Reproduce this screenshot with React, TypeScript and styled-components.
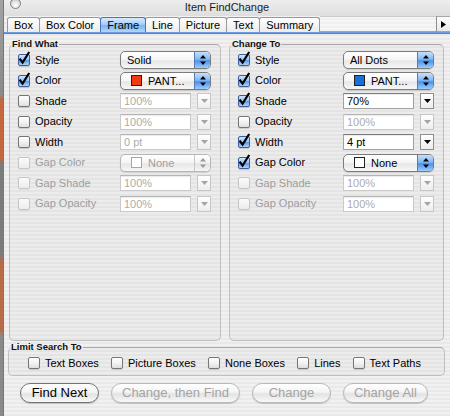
import React from 'react';
import styled, { createGlobalStyle } from 'styled-components';

const GlobalStyle = createGlobalStyle`
  *, *::before, *::after { box-sizing: border-box; }
  html, body { margin: 0; padding: 0; }
  body {
    width: 450px;
    height: 416px;
    overflow: hidden;
    background: #8b8b8b;
    font-family: "Liberation Sans", Arial, sans-serif;
  }
`;

type RowSpec = {
  label: string;
  checked?: boolean;
  disabled?: boolean;
  kind: 'popup' | 'field';
  value: string;
  swatch?: string;
  live?: boolean;
};

const findRows: RowSpec[] = [
  { label: 'Style', checked: true, kind: 'popup', value: 'Solid', live: true },
  { label: 'Color', checked: true, kind: 'popup', value: 'PANT...', swatch: '#f23a10', live: true },
  { label: 'Shade', kind: 'field', value: '100%' },
  { label: 'Opacity', kind: 'field', value: '100%' },
  { label: 'Width', kind: 'field', value: '0 pt' },
  { label: 'Gap Color', disabled: true, kind: 'popup', value: 'None', swatch: '#ffffff' },
  { label: 'Gap Shade', disabled: true, kind: 'field', value: '100%' },
  { label: 'Gap Opacity', disabled: true, kind: 'field', value: '100%' },
];

const changeRows: RowSpec[] = [
  { label: 'Style', checked: true, kind: 'popup', value: 'All Dots', live: true },
  { label: 'Color', checked: true, kind: 'popup', value: 'PANT...', swatch: '#1b6fd8', live: true },
  { label: 'Shade', checked: true, kind: 'field', value: '70%', live: true },
  { label: 'Opacity', kind: 'field', value: '100%' },
  { label: 'Width', checked: true, kind: 'field', value: '4 pt', live: true },
  { label: 'Gap Color', checked: true, kind: 'popup', value: 'None', swatch: '#ffffff', live: true },
  { label: 'Gap Shade', disabled: true, kind: 'field', value: '100%' },
  { label: 'Gap Opacity', disabled: true, kind: 'field', value: '100%' },
];

const tabs = ['Box', 'Box Color', 'Frame', 'Line', 'Picture', 'Text', 'Summary'];
const limits = ['Text Boxes', 'Picture Boxes', 'None Boxes', 'Lines', 'Text Paths'];

export default function App() {
  return (
    <Screen>
      <GlobalStyle />
      <DesktopEdge />
      <Window>
        <TitleBar>
          <CloseDot />
          <Title>Item FindChange</Title>
          <span />
        </TitleBar>
        <TabStrip>
          {tabs.map(t => (
            <Tab key={t} $active={t === 'Frame'}>{t}</Tab>
          ))}
          <TabFiller />
          <ScrollArrow>
            <svg width="5" height="7" viewBox="0 0 5 7">
              <path d="M0 0 L5 3.5 L0 7Z" fill="#000" />
            </svg>
          </ScrollArrow>
        </TabStrip>
        <TabRule />
        <Body>
          <Columns>
            <Panel title="Find What" rows={findRows} />
            <Panel title="Change To" rows={changeRows} />
          </Columns>
          <LimitGroup>
            <GroupTitle>Limit Search To</GroupTitle>
            <LimitOptions>
              {limits.map(l => (
                <CheckLabel key={l}>
                  <CheckBox />
                  {l}
                </CheckLabel>
              ))}
            </LimitOptions>
          </LimitGroup>
          <ButtonRow>
            <PushButton>Find Next</PushButton>
            <PushButton $disabled>Change, then Find</PushButton>
            <PushButton $disabled>Change</PushButton>
            <PushButton $disabled>Change All</PushButton>
          </ButtonRow>
        </Body>
      </Window>
    </Screen>
  );
}

function Panel({ title, rows }: { title: string; rows: RowSpec[] }) {
  return (
    <Group>
      <GroupTitle>{title}</GroupTitle>
      <Rows>
        {rows.map(r => (
          <Row key={r.label}>
            <CheckLabel $disabled={r.disabled}>
              <CheckBox checked={r.checked} disabled={r.disabled} />
              {r.label}
            </CheckLabel>
            {r.kind === 'popup' ? (
              <Popup $disabled={!r.live}>
                <PopupText $indent={!!r.swatch}>
                  {r.swatch && <Swatch $color={r.swatch} $disabled={!r.live} />}
                  {r.value}
                </PopupText>
                <PopupArrows $disabled={!r.live}>
                  <svg width="6" height="10" viewBox="0 0 6 10">
                    <path d="M0 3.5 L3 0 L6 3.5Z M0 6.5 L3 10 L6 6.5Z" fill={r.live ? '#000' : '#9a9a9a'} />
                  </svg>
                </PopupArrows>
              </Popup>
            ) : (
              <FieldGroup>
                <Field $disabled={!r.live}>{r.value}</Field>
                <StepButton $disabled={!r.live}>
                  <svg width="7" height="4" viewBox="0 0 7 4">
                    <path d="M0 0 L7 0 L3.5 4Z" fill={r.live ? '#000' : '#a4a4a4'} />
                  </svg>
                </StepButton>
              </FieldGroup>
            )}
          </Row>
        ))}
      </Rows>
    </Group>
  );
}

function CheckBox({ checked, disabled }: { checked?: boolean; disabled?: boolean }) {
  return (
    <Box $checked={checked} $disabled={disabled}>
      {checked && (
        <Tick width="14" height="14" viewBox="0 0 14 14">
          <path d="M1.6 4.6 L4.6 8.6 L11.2 -2" fill="none" stroke="#000" strokeWidth="2.2" />
        </Tick>
      )}
    </Box>
  );
}

const Screen = styled.div`
  display: flex;
  width: 450px;
  height: 416px;
  overflow: hidden;
`;

const DesktopEdge = styled.div`
  flex: none;
  width: 3px;
  background: linear-gradient(
    to bottom,
    #a2a2a2 0,
    #8a8a8a 95px,
    #c4683e 100px,
    #c4683e 158px,
    #7c7c7c 164px,
    #7c7c7c 255px,
    #b96b48 262px,
    #b96b48 330px,
    #8a8a8a 336px
  );
`;

const Window = styled.div`
  flex: 1;
  display: flex;
  flex-direction: column;
  border-left: 1px solid #777;
  background: repeating-linear-gradient(to bottom, #f1f1f1 0 2px, #e9e9e9 2px 4px);
  color: #000;
`;

const TitleBar = styled.div`
  flex: none;
  height: 16px;
  display: grid;
  grid-template-columns: 40px 1fr 40px;
  align-items: start;
  background: linear-gradient(#ededed, #dedede);
`;

const CloseDot = styled.span`
  width: 11px;
  height: 11px;
  margin: -2px 0 0 6px;
  border-radius: 50%;
  border: 1px solid #7f7f7f;
  background: radial-gradient(circle at 50% 70%, #ffffff 0, #e6e6e6 45%, #b6b6b6 100%);
`;

const Title = styled.div`
  text-align: center;
  font-size: 11px;
  line-height: 13px;
  padding-top: 1px;
  color: #1c1c1c;
`;

const TabStrip = styled.div`
  flex: none;
  height: 16px;
  display: flex;
  align-items: flex-end;
  padding-left: 3px;
`;

const Tab = styled.div<{ $active?: boolean }>`
  position: relative;
  z-index: ${p => (p.$active ? 1 : 0)};
  height: 15px;
  margin-right: -1px;
  padding: 0 6px;
  border: 1px solid ${p => (p.$active ? '#4d72b6' : '#989898')};
  border-bottom: none;
  border-radius: 3px 3px 0 0;
  font-size: 11px;
  line-height: 14px;
  white-space: nowrap;
  background: ${p =>
    p.$active
      ? 'linear-gradient(#d8ebff, #a6cef8 45%, #7bb4f1 55%, #b0d7fb)'
      : 'linear-gradient(#ffffff, #ebebeb)'};
`;

const TabFiller = styled.div`
  flex: 1;
  height: 16px;
  margin-left: 1px;
  border-top: 1px solid #cbcbcb;
  border-bottom: 1px solid #a4a4a4;
  background: rgba(255, 255, 255, 0.35);
`;

const ScrollArrow = styled.div`
  flex: none;
  width: 14px;
  height: 16px;
  display: flex;
  align-items: center;
  justify-content: center;
  border-left: 1px solid #8e8e8e;
  border-top: 1px solid #a8a8a8;
  border-bottom: 1px solid #a4a4a4;
  background: linear-gradient(#ffffff, #e8e8e8);
`;

const TabRule = styled.div`
  flex: none;
  height: 2px;
  background: linear-gradient(#7ca9e8, #3f77cc);
`;

const Body = styled.div`
  flex: 1;
  display: flex;
  flex-direction: column;
  padding: 4px 6px 0 5px;
`;

const Columns = styled.div`
  display: grid;
  grid-template-columns: 212px 1fr;
  column-gap: 8px;
  height: 303px;
`;

const Group = styled.fieldset`
  margin: 0;
  padding: 0;
  min-width: 0;
  border: 1px solid #bfbfbf;
  border-top-color: #a8a8a8;
  border-radius: 5px;
  background: rgba(0, 0, 0, 0.02);
`;

const GroupTitle = styled.legend`
  margin-left: 1px;
  padding: 0 1px;
  font-size: 9.5px;
  font-weight: bold;
  line-height: 12px;
  color: #111;
`;

const Rows = styled.div`
  display: flex;
  flex-direction: column;
  gap: 2.5px;
  padding: 1px 9px 0 8px;
`;

const Row = styled.div`
  display: grid;
  grid-template-columns: 1fr 91px;
  align-items: center;
  height: 18px;
`;

const CheckLabel = styled.label<{ $disabled?: boolean }>`
  display: flex;
  align-items: center;
  gap: 5px;
  font-size: 11px;
  line-height: 13px;
  white-space: nowrap;
  color: ${p => (p.$disabled ? '#9e9e9e' : '#000')};
`;

const Box = styled.span<{ $checked?: boolean; $disabled?: boolean }>`
  position: relative;
  flex: none;
  width: 12px;
  height: 12px;
  border-radius: 2px;
  border: 1px solid ${p => (p.$checked ? '#3e5f9a' : p.$disabled ? '#c6c6c6' : '#767676')};
  background: ${p =>
    p.$checked
      ? 'linear-gradient(#d2e6fc, #92c0f4 50%, #5e9de9 55%, #acd4fb)'
      : p.$disabled
      ? 'linear-gradient(#fbfbfb, #ececec)'
      : 'linear-gradient(#ffffff, #f2f2f2 50%, #dedede)'};
  box-shadow: 0 1px 1px rgba(0, 0, 0, ${p => (p.$disabled ? 0.05 : 0.15)});
`;

const Tick = styled.svg`
  position: absolute;
  left: -1px;
  top: -1px;
  overflow: visible;
`;

const Popup = styled.div<{ $disabled?: boolean }>`
  height: 18px;
  display: flex;
  align-items: stretch;
  border: 1px solid ${p => (p.$disabled ? '#b6b6b6' : '#7c7c7c')};
  border-radius: 5px;
  overflow: hidden;
  background: linear-gradient(#ffffff, #f4f4f4 50%, #e6e6e6 55%, #f7f7f7);
  box-shadow: 0 1px 1px rgba(0, 0, 0, 0.12);
  font-size: 11px;
  color: ${p => (p.$disabled ? '#9e9e9e' : '#000')};
`;

const PopupText = styled.span<{ $indent?: boolean }>`
  flex: 1;
  display: flex;
  align-items: center;
  gap: 6px;
  padding-left: ${p => (p.$indent ? 10 : 6)}px;
  white-space: nowrap;
`;

const Swatch = styled.span<{ $color: string; $disabled?: boolean }>`
  width: 11px;
  height: 11px;
  border: 1px solid ${p => (p.$disabled ? '#a6a6a6' : '#222')};
  background: ${p => p.$color};
`;

const PopupArrows = styled.span<{ $disabled?: boolean }>`
  flex: none;
  width: 16px;
  display: flex;
  align-items: center;
  justify-content: center;
  border-left: 1px solid ${p => (p.$disabled ? '#c8c8c8' : '#5878b8')};
  background: ${p =>
    p.$disabled
      ? 'linear-gradient(#ffffff, #f2f2f2 50%, #e4e4e4 55%, #f6f6f6)'
      : 'linear-gradient(#c4e0fc, #84b8f3 45%, #4b92ea 55%, #9ccdfb)'};
`;

const FieldGroup = styled.div`
  display: flex;
  align-items: center;
  gap: 6px;
`;

const Field = styled.div<{ $disabled?: boolean }>`
  width: 71px;
  height: 16px;
  padding: 0 3px;
  border: 1px solid ${p => (p.$disabled ? '#cacaca' : '#a2a2a2')};
  border-top-color: ${p => (p.$disabled ? '#b4b4b4' : '#7a7a7a')};
  background: #fff;
  box-shadow: inset 0 1px 1px rgba(0, 0, 0, 0.08);
  font-size: 11px;
  line-height: 14px;
  color: ${p => (p.$disabled ? '#acacac' : '#000')};
`;

const StepButton = styled.div<{ $disabled?: boolean }>`
  width: 14px;
  height: 16px;
  display: flex;
  align-items: center;
  justify-content: center;
  border: 1px solid ${p => (p.$disabled ? '#c6c6c6' : '#8e8e8e')};
  background: linear-gradient(#ffffff, #ededed);
`;

const LimitGroup = styled(Group)`
  margin: 0 -1px;
`;

const LimitOptions = styled.div`
  display: flex;
  justify-content: space-between;
  align-items: center;
  height: 22px;
  padding: 1px 23px 3px 19px;
`;

const ButtonRow = styled.div`
  display: flex;
  gap: 12px;
  margin-top: 7px;
  padding-left: 11px;
`;

const PushButton = styled.button<{ $disabled?: boolean }>`
  height: 20px;
  min-width: 79px;
  padding: 0 10px;
  border-radius: 10px;
  border: 1px solid ${p => (p.$disabled ? '#b8b8b8' : '#737373')};
  background: linear-gradient(#ffffff 0%, #f4f4f4 45%, #e3e3e3 55%, #f8f8f8 100%);
  box-shadow: 0 1px 1px rgba(0, 0, 0, 0.18);
  font-family: inherit;
  font-size: 13px;
  line-height: 18px;
  white-space: nowrap;
  color: ${p => (p.$disabled ? '#a4a4a4' : '#000')};
`;
